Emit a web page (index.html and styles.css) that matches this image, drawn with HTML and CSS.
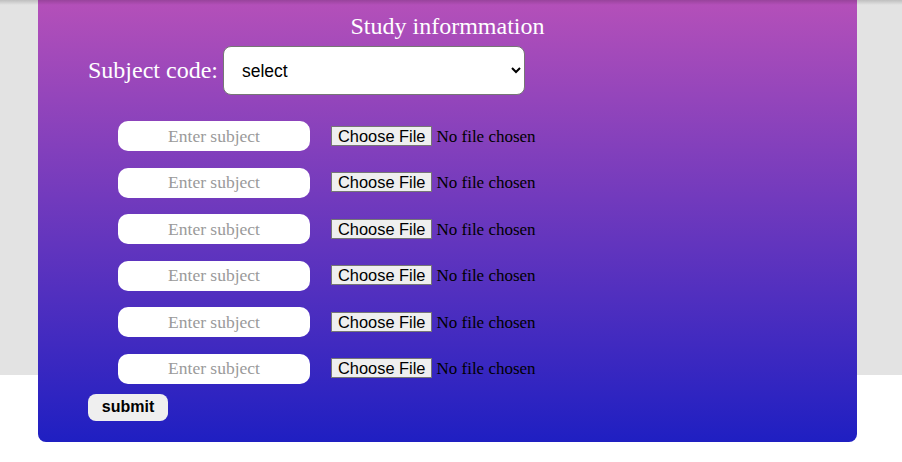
FILE: index.html
```html
<!DOCTYPE html>
<html>
<head>
<meta charset="utf-8">
<link rel="stylesheet" href="styles.css">
</head>
<body>
<div class="topshade"></div>
<form class="card">
  <h2 class="title">Study informmation</h2>
  <div class="code-row">
    <label class="code-label">Subject code:</label>
    <select class="code-select"><option>select</option></select>
  </div>
  <div class="rows">
    <div class="row"><input class="subject" type="text" placeholder="Enter subject"><input class="file" type="file"></div>
    <div class="row"><input class="subject" type="text" placeholder="Enter subject"><input class="file" type="file"></div>
    <div class="row"><input class="subject" type="text" placeholder="Enter subject"><input class="file" type="file"></div>
    <div class="row"><input class="subject" type="text" placeholder="Enter subject"><input class="file" type="file"></div>
    <div class="row"><input class="subject" type="text" placeholder="Enter subject"><input class="file" type="file"></div>
    <div class="row"><input class="subject" type="text" placeholder="Enter subject"><input class="file" type="file"></div>
  </div>
  <button class="submit" type="button">submit</button>
</form>
</body>
</html>
```
FILE: styles.css
```css
html, body {
  margin: 0;
  padding: 0;
}
body {
  height: 462px;
  background: linear-gradient(#e3e3e3 0, #e3e3e3 375px, #ffffff 375px);
  font-family: "Liberation Serif", serif;
  position: relative;
  overflow: hidden;
}
.topshade {
  position: absolute;
  left: 0;
  top: 0;
  right: 0;
  height: 5px;
  background: linear-gradient(rgba(0,0,0,0.16), rgba(0,0,0,0));
  z-index: 2;
}
.card {
  box-sizing: border-box;
  width: 819px;
  margin-left: 38px;
  padding: 12px 0 21px 50px;
  background: linear-gradient(#b550b9, #1f1fc2);
  border-radius: 0 0 8px 8px;
}
.title {
  margin: 0 0 0 -50px;
  text-align: center;
  font-weight: normal;
  font-size: 24px;
  line-height: 28px;
  color: #ffffff;
}
.code-row {
  display: flex;
  align-items: center;
  gap: 5px;
  margin-top: 6px;
}
.code-label {
  color: #ffffff;
  font-size: 24px;
}
.code-select {
  width: 302px;
  height: 49px;
  box-sizing: border-box;
  border: 1px solid #767676;
  border-radius: 8px;
  background: #ffffff;
  padding-left: 14px;
  font-family: "Liberation Sans", Arial, sans-serif;
  font-size: 17.5px;
  color: #000;
}
.rows {
  display: grid;
  gap: 16.6px;
  margin-top: 26px;
  padding-left: 30px;
}
.row {
  display: flex;
  align-items: center;
  gap: 21px;
  height: 30px;
}
.subject {
  box-sizing: border-box;
  width: 192px;
  height: 30px;
  border: none;
  border-radius: 10px;
  background: #ffffff;
  text-align: center;
  font-family: "Liberation Serif", serif;
  font-size: 17.5px;
  outline: none;
}
.subject::placeholder {
  color: #9a9a9a;
}
.file {
  font-family: "Liberation Serif", serif;
  font-size: 17px;
  color: #000;
}
.file::file-selector-button {
  font-family: "Liberation Sans", Arial, sans-serif;
  font-size: 16.4px;
  background: #efefef;
  border: 1px solid #767676;
  border-radius: 0;
  padding: 0 6px;
  height: 20px;
  margin-right: 4px;
  color: #000;
}
.submit {
  display: block;
  margin-top: 10px;
  width: 80px;
  height: 27px;
  border: none;
  border-radius: 8px;
  background: #efefef;
  font-family: "Liberation Sans", Arial, sans-serif;
  font-weight: bold;
  font-size: 16px;
  color: #000;
  padding: 0;
}
```
